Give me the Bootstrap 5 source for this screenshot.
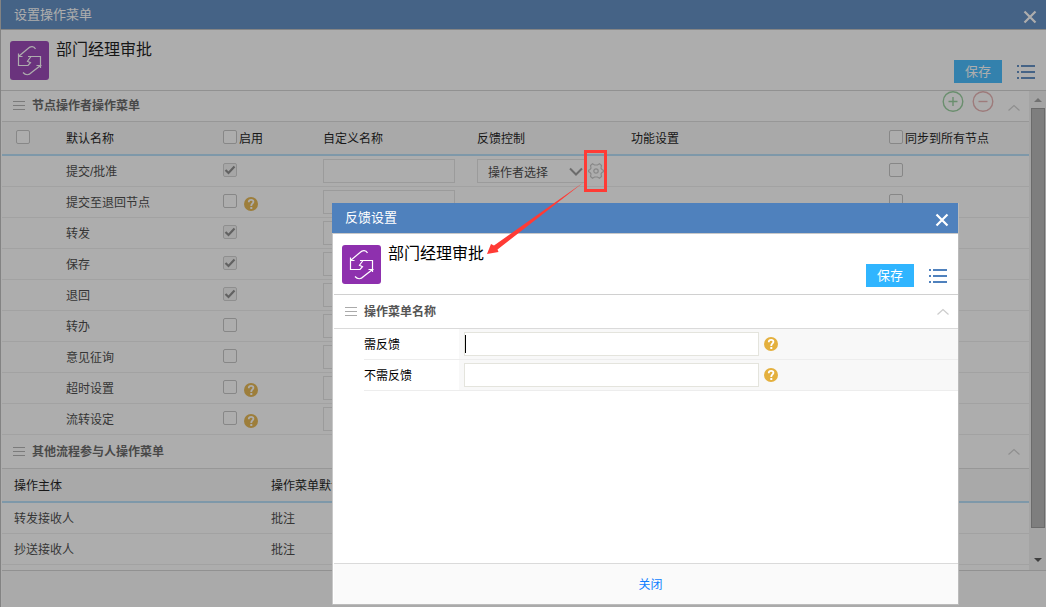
<!DOCTYPE html>
<html lang="zh-CN">
<head>
<meta charset="utf-8">
<meta name="viewport" content="width=device-width, initial-scale=1">
<title>设置操作菜单</title>
<link href="https://cdn.jsdelivr.net/npm/bootstrap@5.3.0/dist/css/bootstrap.min.css" rel="stylesheet">
<style>
  body { font-family: "Liberation Sans", "Noto Sans CJK SC", sans-serif; font-size: 12px; line-height: 18px; color: #000; background: #fff; }
  .window-bar { background: #4f81bd; color: #fff; font-size: 13px; padding: 0 9px 0 13px; height: 30px; }
  .page-shell > .window-bar { border-bottom: 1px solid #bbb; }
  .bar-close { padding: 4px 0 0; border: 0; background: none; color: #fff; display: flex; }
  .page-shell { border-left: 1px solid #b8b8b8; }
  .head-area { height: 61px; border-bottom: 1px solid #d0d0d0; padding: 0 11px 7px 9px; }
  .head-title { font-size: 16px; line-height: 24px; margin: 8px 0 0 7px; font-weight: 400; }
  .head-tools { gap: 15px; }
  .btn-save { width: 48px; height: 23px; padding: 0; font-size: 13px; line-height: 23px; border: 0; border-radius: 0; background: #30b5ff; color: #fff; }
  .btn-plain { padding: 0; border: 0; background: none; display: flex; }
  .page-main { min-width: 0; padding: 0 0 5px 1px; }
  .section-head { height: 34px; border-bottom: 1px solid #dadada; color: #555; padding: 0 9px 0 11px; }
  .section-head.is-short { height: 31px; }
  .section-head h2 { font-size: 12px; line-height: 18px; font-weight: 700; margin: 0 0 0 7px; }
  .round-tools { gap: 8px; }
  .sheet { width: 100%; table-layout: fixed; border-collapse: separate; border-spacing: 0; color: #333; }
  .sheet th { height: 34px; background: #f8f8f8; border-bottom: 2px solid #b0dcf8; color: #000; font-weight: 400; padding: 2px 0 0; white-space: nowrap; }
  .sheet td { height: 31px; border-bottom: 1px solid #ededed; padding: 0; white-space: nowrap; }
  .sheet td.word { padding-top: 2px; }
  .sheet th.inset, .sheet td.inset { padding-left: 12px; }
  .sheet th.pick-all { padding-left: 14px; }
  .sheet .check-line { padding-bottom: 2px; }
  .sheet .form-check-input { width: 14px; height: 14px; margin: 0; border: 1px solid #bfbfbf; border-radius: 2px; flex: none; background-size: 12px 12px; }
  .sheet th .form-check-input { margin-bottom: 4px; }
  .sheet th label { padding-left: 2px; }
  .sheet .form-check-input:checked { background-color: #f4f4f4; border-color: #ccc; opacity: 1; background-image: url("data:image/svg+xml,%3Csvg xmlns='http://www.w3.org/2000/svg' viewBox='0 0 12 12'%3E%3Cpath fill='none' stroke='%23808080' stroke-width='2.2' d='M1.5 6l3 3 6-6.500'/%3E%3C/svg%3E"); }
  .field { height: 24px; padding: 0 5px; border: 1px solid #e4e4dd; border-radius: 0; font-size: 12px; line-height: 18px; }
  .sheet .field { width: 132px; border-color: #e0e0e0; }
  .sheet select.field { width: 109px; padding: 4px 24px 0 10px; color: #333; background-position: right 2px center; background-size: 14px 14px;
    background-image: url("data:image/svg+xml,%3Csvg xmlns='http://www.w3.org/2000/svg' viewBox='0 0 14 14'%3E%3Cpath fill='none' stroke='%23909090' stroke-width='2' d='M1 4.500l6 6 6-6'/%3E%3C/svg%3E"); }
  .gear { margin-left: 2px; }
  .hint { flex: none; display: block; margin-left: 5px; }
  .sheet .hint { margin: 5px 0 0 7px; }
  .scroll-track { width: 17px; flex: none; background: #f0f0f0; padding: 0 1px 0 2px; }
  .scroll-thumb { height: 420px; background: #b0b0b0; border: 1px solid #909090; }
  .page-foot { background: #fafafa; border-top: 1px solid #d0d0d0; margin-left: 1px; }
  .veil { background: rgba(57, 57, 57, .41); z-index: 10; }
  .dialog-box { left: 332px; right: 87px; top: 203px; bottom: 2px; z-index: 20; background: #fff; border-right: 1px solid #bbb; border-bottom: 1px solid #bbb; }
  .dialog-body { border-left: 1px solid #c8c8c8; border-top: 1px solid #c8c8c8; padding-left: 1px; }
  .dialog-body .head-area { padding-left: 8px; }
  .form-line { padding-left: 30px; height: 31px; }
  .form-line label { width: 95px; flex: none; line-height: 30px; padding-top: 1px; }
  .form-line > * { border-bottom: 1px solid #ededed; }
  .form-line .value-cell { background: #f8f8f8; padding-left: 5px; }
  .form-line .field { width: 295px; }
  .caret { left: 6px; top: 6px; width: 1px; height: 18px; background: #000; }
  .dialog-foot { height: 41px; background: #fafafa; border-top: 1px solid #dadada; }
  .dialog-foot .btn { font-size: 12px; line-height: 18px; padding: 2px 0 0 9px; border: 0; color: #0d7eff; }
  .callout { left: 484px; top: 148px; z-index: 30; pointer-events: none; }
</style>
</head>
<body>
<svg width="0" height="0" class="position-absolute" aria-hidden="true">
  <symbol id="i-flow" viewBox="0 0 39 39">
    <rect width="39" height="39" rx="3" fill="#8e30ae"/>
    <path d="M25.500 8C24 5 20.500 5 18 7.500L8.500 15.500M8.500 12.500v12H18L20.500 21.700 17.500 20.200 21 15.500M18 15.500H30.500V27M8.500 15.500H12.500M26.500 24.500h4L21.500 31.500C19 34.500 15.500 34.500 13 31.500" fill="none" stroke="#fff" stroke-width="1.200"/>
  </symbol>
  <symbol id="i-close" viewBox="0 0 14 14"><path d="M1.500 1.500l11 11M12.500 1.500l-11 11" stroke="currentColor" stroke-width="2.200"/></symbol>
  <symbol id="i-list" viewBox="0 0 18 14"><path d="M0 1h2M4 1h14M0 7h2M4 7h14M0 13h2M4 13h14" stroke="#4f81bd" stroke-width="2"/></symbol>
  <symbol id="i-bars" viewBox="0 0 12 10"><path d="M0 .5h12M0 4.500h12M0 8.500h12" stroke="#aaa" stroke-width="1"/></symbol>
  <symbol id="i-up" viewBox="0 0 12 8"><path d="M.5 6.500L6 1.500l5.500 5" stroke="#ccc" stroke-width="1.200" fill="none"/></symbol>
  <symbol id="i-hint" viewBox="0 0 14 14"><circle cx="7" cy="7" r="7" fill="#e4b03e"/><path d="M4.800 5.300V4.700C4.800 2.300 9.400 2.200 9.400 4.800 9.400 6.500 7.200 6.500 7.200 9M6.300 11h2" fill="none" stroke="#fff" stroke-width="1.800"/></symbol>
  <symbol id="i-gear" viewBox="0 0 16 16"><path d="M4.500 .8L6.500 2h3l2-1.200L13.500 2.500 13 5l1 1.500 1.400.8v1.400L14 9.500 13 11l.5 2.500-2 1.700L9.500 14h-3l-2 1.200L2.500 13.500 3 11 2 9.500.6 8.700V7.300L2 6.500 3 5 2.500 2.500z" fill="none" stroke="#c0c0c0" stroke-width="1.200"/><circle cx="8" cy="8" r="2.200" fill="none" stroke="#c0c0c0" stroke-width="1.200"/></symbol>
</svg>

<div class="page-shell min-vh-100 d-flex flex-column">
  <header class="window-bar d-flex align-items-center justify-content-between">
    <span>设置操作菜单</span>
    <button class="bar-close" type="button" aria-label="关闭窗口"><svg width="14" height="14"><use href="#i-close"/></svg></button>
  </header>
  <div class="head-area d-flex">
    <svg class="mt-2 flex-shrink-0" width="39" height="43" viewBox="0 -3 39 43"><use href="#i-flow" width="39" height="39"/></svg>
    <h1 class="head-title">部门经理审批</h1>
    <div class="head-tools ms-auto d-flex align-items-end">
      <button class="btn btn-save" type="button">保存</button>
      <button class="btn-plain pb-1" type="button" aria-label="菜单"><svg width="18" height="14"><use href="#i-list"/></svg></button>
    </div>
  </div>
  <div class="d-flex">
    <main class="page-main flex-grow-1">
      <div class="section-head is-short d-flex align-items-center">
        <svg width="12" height="10"><use href="#i-bars"/></svg>
        <h2>节点操作者操作菜单</h2>
        <div class="round-tools ms-auto d-flex align-self-start">
          <button class="btn-plain" type="button" aria-label="添加"><svg width="22" height="21" viewBox="0 0 22 21"><circle cx="11" cy="10.500" r="9.800" fill="none" stroke="#8ecb94" stroke-width="1.400"/><path d="M6.500 10.500h9M11 6v9" stroke="#8ecb94" stroke-width="1.400"/></svg></button>
          <button class="btn-plain" type="button" aria-label="删除"><svg width="22" height="21" viewBox="0 0 22 21"><circle cx="11" cy="10.500" r="9.800" fill="none" stroke="#e4aaaa" stroke-width="1.400"/><path d="M6.500 10.500h9" stroke="#e4aaaa" stroke-width="1.400"/></svg></button>
          <button class="btn-plain ps-1 pt-2" type="button" aria-label="收起"><svg class="mt-1" width="14" height="10" viewBox="-2 -1 14 10"><use href="#i-up" width="12" height="8"/></svg></button>
        </div>
      </div>
      <table class="sheet">
        <colgroup><col style="width:64px"><col style="width:157px"><col style="width:100px"><col style="width:154px"><col style="width:154px"><col><col style="width:140px"></colgroup>
        <thead>
          <tr>
            <th class="pick-all"><div class="d-flex"><input class="form-check-input" type="checkbox" aria-label="全选"></div></th>
            <th>默认名称</th>
            <th><div class="d-flex align-items-center"><input class="form-check-input" type="checkbox" id="useAll"><label for="useAll">启用</label></div></th>
            <th>自定义名称</th><th>反馈控制</th><th>功能设置</th>
            <th><div class="d-flex align-items-center"><input class="form-check-input" type="checkbox" id="syncAll"><label for="syncAll">同步到所有节点</label></div></th>
          </tr>
        </thead>
        <tbody id="menuRows"></tbody>
      </table>
      <div class="section-head d-flex align-items-center">
        <svg width="12" height="10"><use href="#i-bars"/></svg>
        <h2>其他流程参与人操作菜单</h2>
        <button class="btn-plain ms-auto" type="button" aria-label="收起"><svg width="12" height="8"><use href="#i-up"/></svg></button>
      </div>
      <table class="sheet">
        <colgroup><col style="width:269px"><col></colgroup>
        <thead><tr><th class="inset">操作主体</th><th>操作菜单默认名称</th></tr></thead>
        <tbody>
          <tr><td class="word inset">转发接收人</td><td class="word">批注</td></tr>
          <tr><td class="word inset">抄送接收人</td><td class="word">批注</td></tr>
        </tbody>
      </table>
    </main>
    <div class="scroll-track d-flex flex-column" aria-hidden="true">
      <svg width="14" height="17" viewBox="0 0 14 17"><path d="M3 11l4-4 4 4z" fill="#999"/></svg>
      <div class="scroll-thumb"></div>
      <svg class="mt-auto" width="14" height="20" viewBox="0 0 14 20"><path d="M3 8h8l-4 4z" fill="#444"/></svg>
    </div>
  </div>
  <footer class="page-foot flex-grow-1"></footer>
</div>

<div class="veil position-fixed top-0 start-0 w-100 h-100"></div>

<div class="dialog-box position-fixed d-flex flex-column" role="dialog" aria-label="反馈设置">
  <div class="window-bar d-flex align-items-center justify-content-between">
    <span>反馈设置</span>
    <button class="bar-close" type="button" aria-label="关闭对话框"><svg width="14" height="14"><use href="#i-close"/></svg></button>
  </div>
  <div class="dialog-body flex-grow-1 d-flex flex-column">
    <div class="head-area d-flex">
      <svg class="mt-2 flex-shrink-0" width="39" height="43" viewBox="0 -3 39 43"><use href="#i-flow" width="39" height="39"/></svg>
      <h2 class="head-title">部门经理审批</h2>
      <div class="head-tools ms-auto d-flex align-items-end">
        <button class="btn btn-save" type="button">保存</button>
        <button class="btn-plain pb-1" type="button" aria-label="菜单"><svg width="18" height="14"><use href="#i-list"/></svg></button>
      </div>
    </div>
    <div class="section-head d-flex align-items-center">
      <svg width="12" height="10"><use href="#i-bars"/></svg>
      <h2>操作菜单名称</h2>
      <button class="btn-plain ms-auto" type="button" aria-label="收起"><svg width="12" height="8"><use href="#i-up"/></svg></button>
    </div>
    <div class="form-line d-flex">
      <label for="needReply">需反馈</label>
      <div class="value-cell flex-grow-1 d-flex align-items-center position-relative">
        <input class="form-control field" id="needReply" type="text"><span class="caret position-absolute"></span>
        <svg class="hint" width="14" height="14"><use href="#i-hint"/></svg>
      </div>
    </div>
    <div class="form-line d-flex">
      <label for="noReply">不需反馈</label>
      <div class="value-cell flex-grow-1 d-flex align-items-center">
        <input class="form-control field" id="noReply" type="text">
        <svg class="hint" width="14" height="14"><use href="#i-hint"/></svg>
      </div>
    </div>
    <div class="dialog-foot mt-auto d-flex align-items-center justify-content-center">
      <button class="btn" type="button">关闭</button>
    </div>
  </div>
</div>

<svg class="callout position-absolute" width="126" height="110" viewBox="484 148 126 110" aria-hidden="true">
  <rect x="585.500" y="151.500" width="20" height="39" fill="none" stroke="#ff3b35" stroke-width="3"/>
  <path d="M584 182L497.500 249.500l1 2.500L487 254l4-10 3 1.500z" fill="#ff3b35"/>
</svg>

<script>
  const rows = [
    ['提交/批准', 1, 0, 1], ['提交至退回节点', 0, 1], ['转发', 1, 0], ['保存', 1, 0], ['退回', 1, 0],
    ['转办', 0, 0], ['意见征询', 0, 0], ['超时设置', 0, 1], ['流转设定', 0, 1]
  ];
  const hint = '<svg class="hint" width="14" height="14"><use href="#i-hint"/></svg>';
  const control = '<div class="d-flex align-items-center"><select class="form-select field" aria-label="反馈控制"><option>操作者选择</option></select>' +
    '<svg class="gear" width="16" height="16"><use href="#i-gear"/></svg></div>';
  document.getElementById('menuRows').innerHTML = rows.map(([name, on, tip, fb]) =>
    `<tr><td></td><td class="word">${name}</td>
     <td><div class="check-line d-flex align-items-center"><input class="form-check-input" type="checkbox" aria-label="启用${name}" ${on ? 'checked disabled' : ''}>${tip ? hint : ''}</div></td>
     <td><input class="form-control field" type="text" aria-label="${name}自定义名称"></td>
     <td>${fb ? control : ''}</td><td></td>
     <td><div class="check-line d-flex"><input class="form-check-input" type="checkbox" aria-label="同步${name}"></div></td></tr>`).join('');
</script>
<script src="https://cdn.jsdelivr.net/npm/bootstrap@5.3.0/dist/js/bootstrap.bundle.min.js"></script>
</body>
</html>
